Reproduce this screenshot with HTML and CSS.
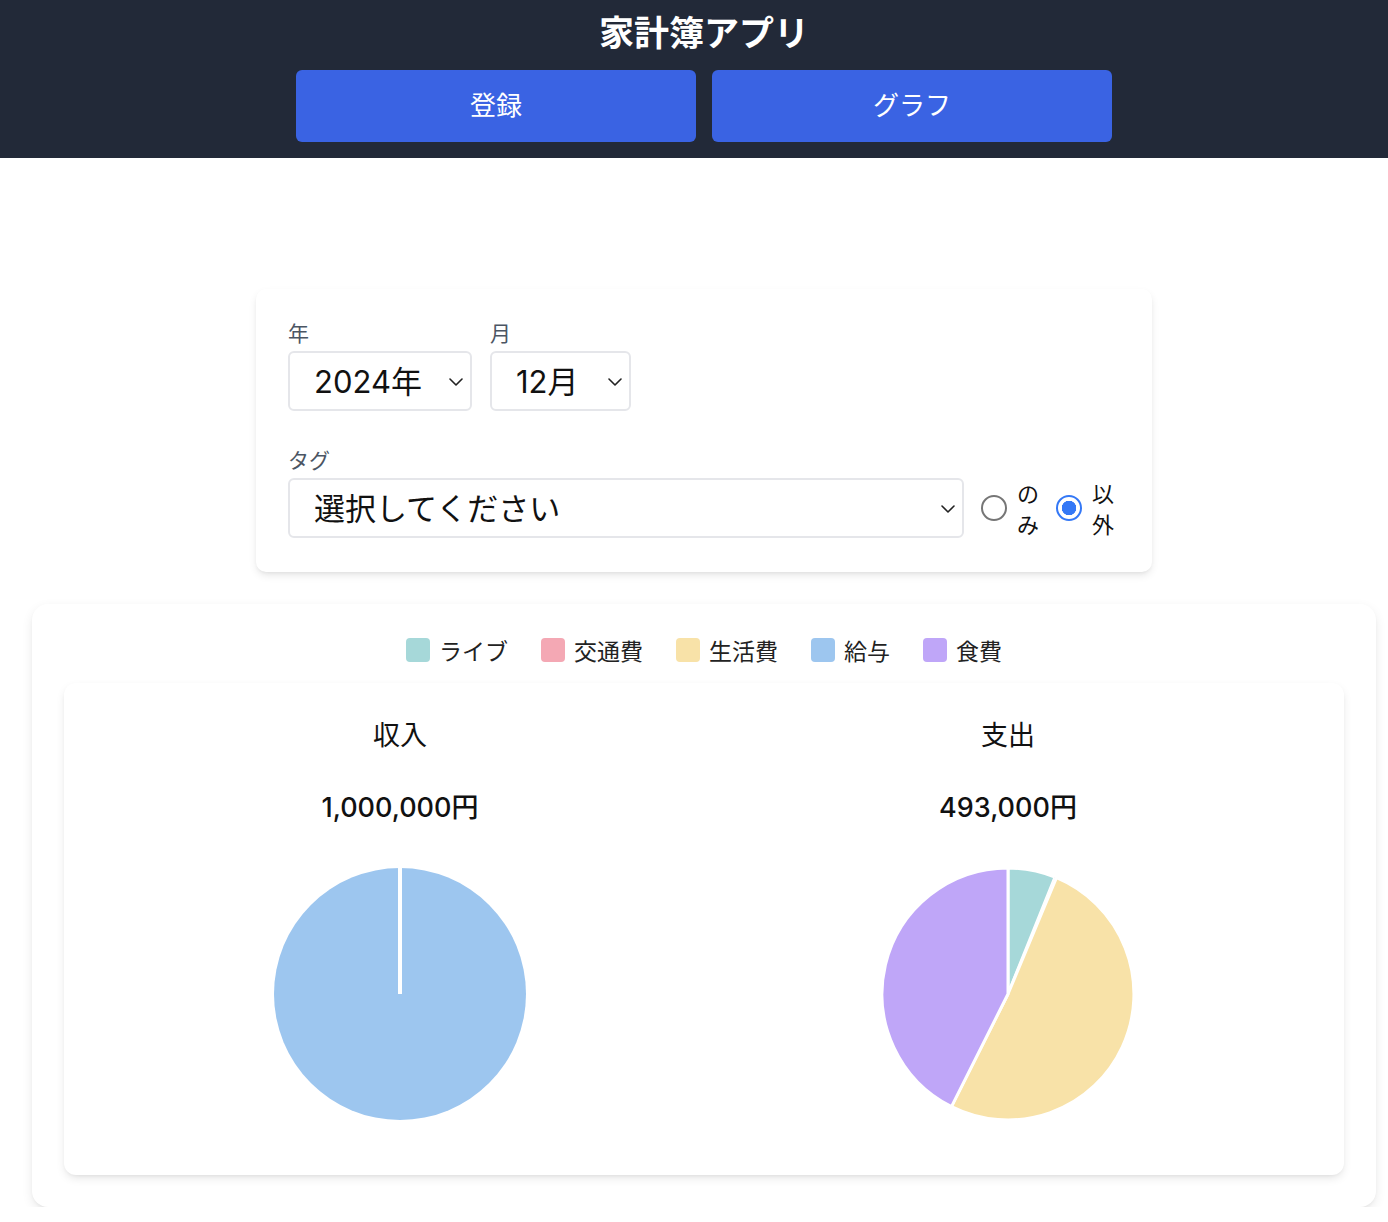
FILE: index.html
```html
<!DOCTYPE html>
<html lang="ja">
<head>
<meta charset="utf-8">
<title>家計簿アプリ</title>
<link rel="stylesheet" href="styles.css">
</head>
<body>
<header class="app-header">
  <h1 class="app-title">家計簿アプリ</h1>
  <nav class="nav">
    <button class="nav-btn">登録</button>
    <button class="nav-btn">グラフ</button>
  </nav>
</header>

<main class="main">
  <section class="filter-card">
    <div class="date-row">
      <div class="field field-year">
        <label class="field-label">年</label>
        <div class="select-wrap">
          <select class="select"><option>2024年</option></select>
          <svg class="chevron" viewBox="0 0 14 8" width="14" height="8"><path d="M1 1l6 6 6-6" fill="none" stroke="#222" stroke-width="1.6" stroke-linecap="round" stroke-linejoin="round"/></svg>
        </div>
      </div>
      <div class="field field-month">
        <label class="field-label">月</label>
        <div class="select-wrap">
          <select class="select"><option>12月</option></select>
          <svg class="chevron" viewBox="0 0 14 8" width="14" height="8"><path d="M1 1l6 6 6-6" fill="none" stroke="#222" stroke-width="1.6" stroke-linecap="round" stroke-linejoin="round"/></svg>
        </div>
      </div>
    </div>
    <div class="field field-tag">
      <label class="field-label">タグ</label>
      <div class="tag-row">
        <div class="select-wrap tag-select">
          <select class="select"><option>選択してください</option></select>
          <svg class="chevron" viewBox="0 0 14 8" width="14" height="8"><path d="M1 1l6 6 6-6" fill="none" stroke="#222" stroke-width="1.6" stroke-linecap="round" stroke-linejoin="round"/></svg>
        </div>
        <label class="radio-opt">
          <input class="radio" type="radio" name="mode">
          <span class="radio-text">のみ</span>
        </label>
        <label class="radio-opt">
          <input class="radio" type="radio" name="mode" checked>
          <span class="radio-text">以外</span>
        </label>
      </div>
    </div>
  </section>

  <section class="chart-card">
    <ul class="legend">
      <li class="legend-item"><span class="swatch sw-live"></span>ライブ</li>
      <li class="legend-item"><span class="swatch sw-traffic"></span>交通費</li>
      <li class="legend-item"><span class="swatch sw-living"></span>生活費</li>
      <li class="legend-item"><span class="swatch sw-salary"></span>給与</li>
      <li class="legend-item"><span class="swatch sw-food"></span>食費</li>
    </ul>
    <div class="chart-inner">
      <div class="chart-col">
        <div class="chart-title">収入</div>
        <div class="chart-amount">1,000,000円</div>
        <svg class="pie" viewBox="0 0 252 252" width="252" height="252">
          <circle cx="126" cy="126" r="126" fill="#9dc6ef"/>
          <line x1="126" y1="-1" x2="126" y2="126" stroke="#fff" stroke-width="4"/>
        </svg>
      </div>
      <div class="chart-col">
        <div class="chart-title">支出</div>
        <div class="chart-amount">493,000円</div>
        <svg class="pie" viewBox="0 0 252 252" width="252" height="252">
          <path d="M126 126 L126 0 A126 126 0 0 1 173.01 9.10 Z" fill="#a6d8d9" stroke="#fff" stroke-width="3"/>
          <path d="M126 126 L173.01 9.10 A126 126 0 0 1 174.50 9.70 Z" fill="#f4a8b4" stroke="#fff" stroke-width="1"/>
          <path d="M126 126 L174.50 9.70 A126 126 0 1 1 69.48 238.61 Z" fill="#f8e2a8" stroke="#fff" stroke-width="3"/>
          <path d="M126 126 L69.48 238.61 A126 126 0 0 1 126 0 Z" fill="#bfa6f8" stroke="#fff" stroke-width="3"/>
        </svg>
      </div>
    </div>
  </section>
</main>
</body>
</html>
```

FILE: styles.css
```css
* { box-sizing: border-box; }

html {
  overflow: hidden;
}

body {
  margin: 0;
  width: 1408px;
  background: #fff;
  color: #111;
  font-family: Inter, "Noto Sans CJK JP", sans-serif;
}

.app-header {
  background: #222938;
  padding: 6px 0 16px;
  display: flex;
  flex-direction: column;
  align-items: center;
}

.app-title {
  margin: 0;
  font-family: "Noto Sans CJK JP", sans-serif;
  font-size: 35px;
  line-height: 50px;
  font-weight: 700;
  color: #fff;
}

.nav {
  display: flex;
  gap: 16px;
  margin-top: 14px;
}

.nav-btn {
  width: 400px;
  height: 72px;
  border: none;
  border-radius: 6px;
  background: #3a63e3;
  color: #fff;
  font-family: "Noto Sans CJK JP", sans-serif;
  font-size: 26px;
  font-weight: 400;
  padding: 0 0 5px;
}

.main {
  padding-top: 131px;
}

.filter-card {
  width: 896px;
  margin: 0 auto;
  background: #fff;
  border-radius: 10px;
  padding: 32px 32px 34px;
  box-shadow: 0 4px 8px -1px rgba(0,0,0,0.10), 0 2px 4px -2px rgba(0,0,0,0.08);
}

.date-row {
  display: flex;
  gap: 18px;
}

.field {
  display: flex;
  flex-direction: column;
}

.field-year { width: 184px; }
.field-month { width: 141px; }
.field-tag { margin-top: 37px; }

.field-label {
  font-family: "Noto Sans CJK JP", sans-serif;
  font-size: 21px;
  line-height: 22px;
  margin-bottom: 8px;
  color: #4b5563;
}

.select-wrap {
  position: relative;
  height: 60px;
}

.select {
  appearance: none;
  -webkit-appearance: none;
  width: 100%;
  height: 60px;
  border: 2px solid #e5e6ea;
  border-radius: 6px;
  background: #fff;
  padding: 0 40px 0 24px;
  font-family: Inter, "Noto Sans CJK JP", sans-serif;
  font-size: 31px;
  color: #111;
}

.chevron {
  position: absolute;
  right: 9px;
  top: 27px;
}

.tag-row {
  display: flex;
  align-items: center;
  height: 60px;
}

.tag-select {
  width: 676px;
  flex: none;
}

.radio-opt {
  display: flex;
  align-items: center;
  margin-left: 17px;
}

.radio-opt + .radio-opt {
  margin-left: 15px;
}

.radio {
  appearance: none;
  -webkit-appearance: none;
  width: 26px;
  height: 26px;
  margin: 0;
  border: 2px solid #767676;
  border-radius: 50%;
  background: #fff;
  flex: none;
}

.radio:checked {
  border-color: #3478f6;
  background: radial-gradient(circle, #3478f6 0 7px, #fff 7.5px);
}

.radio-text {
  width: 24px;
  margin-left: 10px;
  font-family: "Noto Sans CJK JP", sans-serif;
  font-size: 22px;
  line-height: 31px;
  color: #111;
}

.chart-card {
  margin: 32px 32px 0;
  background: #fff;
  border-radius: 16px;
  padding: 32px;
  box-shadow: 0 4px 12px -1px rgba(0,0,0,0.10), 0 2px 4px -2px rgba(0,0,0,0.08);
}

.legend {
  list-style: none;
  margin: 0 0 19px;
  padding: 0;
  height: 28px;
  display: flex;
  justify-content: center;
  align-items: center;
  gap: 33px;
}

.legend-item {
  display: flex;
  align-items: center;
  gap: 9px;
  font-family: "Noto Sans CJK JP", sans-serif;
  font-size: 23px;
  line-height: 28px;
  color: #222;
}

.swatch {
  width: 24px;
  height: 24px;
  border-radius: 4px;
}

.sw-live { background: #a6d8d9; }
.sw-traffic { background: #f4a8b4; }
.sw-living { background: #f8e2a8; }
.sw-salary { background: #9dc6ef; }
.sw-food { background: #bfa6f8; }

.chart-inner {
  background: #fff;
  border-radius: 12px;
  padding: 32px 32px 55px;
  display: grid;
  grid-template-columns: 1fr 1fr;
  box-shadow: 0 4px 10px -1px rgba(0,0,0,0.10), 0 2px 4px -2px rgba(0,0,0,0.08);
}

.chart-col {
  display: flex;
  flex-direction: column;
  align-items: center;
}

.chart-title {
  font-family: "Noto Sans CJK JP", sans-serif;
  font-size: 27px;
  line-height: 38px;
  color: #111;
}

.chart-amount {
  margin-top: 34px;
  font-family: Inter, "Noto Sans CJK JP", sans-serif;
  font-size: 27px;
  font-weight: 500;
  line-height: 42px;
  color: #111;
}

.pie {
  display: block;
  margin-top: 39px;
  overflow: visible;
}
```
